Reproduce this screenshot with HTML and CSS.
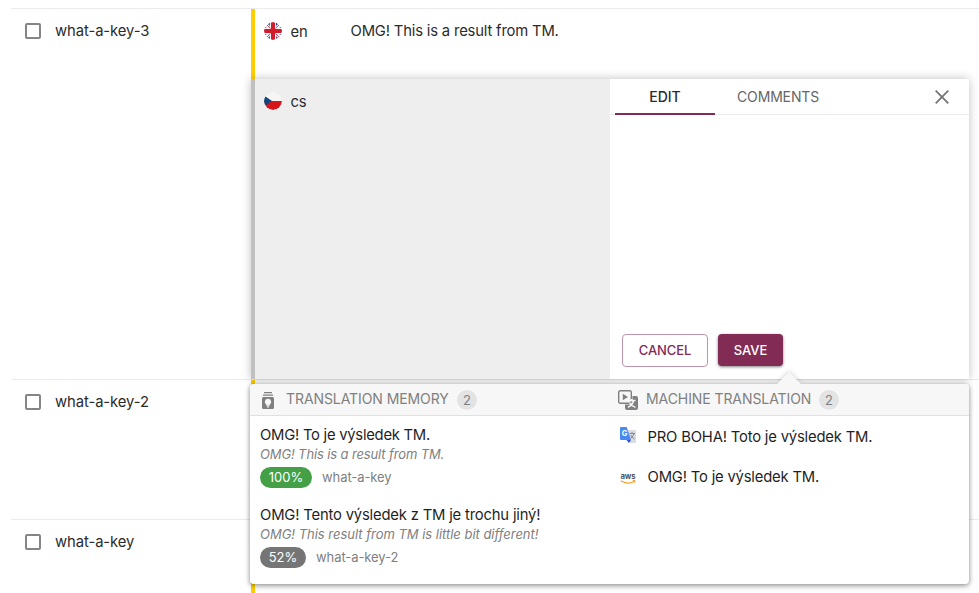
FILE: index.html
```html
<!DOCTYPE html>
<html lang="en">
<head>
<meta charset="utf-8">
<title>Translations</title>
<link rel="stylesheet" href="styles.css">
</head>
<body>
<main class="table">
  <section class="row row-active">
    <div class="key"><span class="checkbox"></span><span class="label">what-a-key-3</span></div>
    <div class="languages">
      <div class="language">
        <svg class="flag" viewBox="0 0 18 18"><defs><clipPath id="round"><circle cx="9" cy="9" r="9"/></clipPath></defs><g clip-path="url(#round)"><path fill="#f3f3f5" d="M0 0h18v18H0z"/><path fill="#24408e" d="M4.800 0H6v3zM12 0h1.200L12 3zM0 4.800 3 6H0zM18 4.800 15 6h3zM0 13.200 3 12H0zM18 13.200 15 12h3zM4.800 18H6v-3zM13.200 18H12v-3zM3.500 1.500 6 4V1.200zM14.500 1.500 12 4V1.200zM3.500 16.500 6 14v2.800zM14.500 16.500 12 14v2.800z"/><path stroke="#d2202f" stroke-width=".8" d="m2 2 4.500 4.500M16 2l-4.500 4.500M2 16l4.500-4.500M16 16l-4.500-4.500"/><path fill="#d01c2c" d="M7 0h4v7h7v4h-7v7H7v-7H0V7h7z"/></g></svg>
        <span class="code">en</span>
        <span class="source">OMG! This is a result from TM.</span>
      </div>
      <div class="editor">
        <div class="target">
          <svg class="flag" viewBox="0 0 18 18"><g clip-path="url(#round)"><path fill="#f5f5f5" d="M0 0h18v9H0z"/><path fill="#d7141a" d="M0 9h18v9H0z"/><path fill="#11457e" d="m0 3.500 8 5.500-8 5.500z"/></g></svg>
          <span class="code">cs</span>
        </div>
        <div class="pane">
          <nav class="tabs">
            <span class="tab tab-on">EDIT</span>
            <span class="tab tab-comments">COMMENTS</span>
            <svg class="close" viewBox="0 0 14 14"><path d="m.7.7 12.600 12.600M13.300.7.7 13.300"/></svg>
          </nav>
          <div class="actions">
            <button class="button cancel">CANCEL</button>
            <button class="button save">SAVE</button>
          </div>
        </div>
      </div>
    </div>
  </section>
  <section class="row row-second">
    <div class="key"><span class="checkbox"></span><span class="label">what-a-key-2</span></div>
    <div class="languages"></div>
  </section>
  <section class="row row-third">
    <div class="key"><span class="checkbox"></span><span class="label">what-a-key</span></div>
    <div class="languages"></div>
  </section>
</main>
<aside class="popup">
  <svg class="arrow" viewBox="0 0 24 12"><path d="M0 12 12 0l12 12z"/></svg>
  <div class="popup-head">
    <div class="head-cell">
      <svg class="memory-icon" viewBox="0 0 12 17"><path fill="#808080" fill-rule="evenodd" d="M2 0h8v1.300H2zM1 2.500h10v1.300H1zM1.500 5h9Q12 5 12 6.500v9q0 1.500-1.500 1.500h-9Q0 17 0 15.500v-9Q0 5 1.500 5zM6 6.700a3.200 3.200 0 0 0-1.700 5.900v1.200h3.400v-1.200A3.200 3.200 0 0 0 6 6.700zM5 14.300v1.200h2v-1.200z"/></svg>
      <span class="head-title memory-title">TRANSLATION MEMORY</span><span class="count">2</span>
    </div>
    <div class="head-cell head-machine">
      <svg class="machine-icon" viewBox="0 0 20 20"><rect x=".7" y=".7" width="12.600" height="12.600" rx="1.600" fill="none" stroke="#808080" stroke-width="1.400"/><path fill="#808080" d="M4.800 3.800 10 7l-5.200 3.200zM14.500 6H18q2 0 2 2v10q0 2-2 2H9q-2 0-2-2v-3.500h5.500q2 0 2-2z"/><path fill="none" stroke="#f7f7f7" stroke-width="1.300" d="M10 10.500h7.500M15.800 10.500q-1 4.500-6 6.800M11.700 13.200q2 3.200 5.800 4.200M13.600 9v1.500"/></svg>
      <span class="head-title machine-title">MACHINE TRANSLATION</span><span class="count">2</span>
    </div>
  </div>
  <div class="popup-body">
    <div class="memory">
      <article class="match">
        <p class="match-text match-text-short">OMG! To je výsledek TM.</p>
        <p class="match-base match-base-short">OMG! This is a result from TM.</p>
        <div class="match-meta"><span class="score score-full">100%</span><span class="match-key">what-a-key</span></div>
      </article>
      <article class="match">
        <p class="match-text">OMG! Tento výsledek z TM je trochu jiný!</p>
        <p class="match-base">OMG! This result from TM is little bit different!</p>
        <div class="match-meta"><span class="score score-part">52%</span><span class="match-key">what-a-key-2</span></div>
      </article>
    </div>
    <div class="machine">
      <div class="suggestion">
        <svg class="provider" viewBox="0 0 16 16"><path fill="#dadce0" d="M7 3h8q1 0 1 1v11q0 1-1 1H10z"/><path fill="#3550c8" d="M6.500 13H11l-2 3z"/><path fill="#4889f4" d="M1 0h5.700L11 13H1q-1 0-1-1V1q0-1 1-1z"/><text x="1.700" y="9" font-size="7.500" font-weight="700" fill="#fff">G</text><path fill="none" stroke="#71859a" stroke-width=".9" d="M9.500 6.500h5.500M12 5.200v1.300M14 6.500q-.5 3-3.500 5M10.700 8q1.200 2.500 3.800 4"/></svg>
        <span>PRO BOHA! Toto je výsledek TM.</span>
      </div>
      <div class="suggestion">
        <svg class="provider" viewBox="0 0 16 16"><text x=".5" y="9" font-size="7.800" font-weight="600" textLength="15" fill="#34404f">aws</text><path fill="none" stroke="#f79a20" stroke-width="1.100" d="M.7 10.800q7 4.200 13.300.7M12.800 10.500q3-.5 1.700 2"/></svg>
        <span>OMG! To je výsledek TM.</span>
      </div>
    </div>
  </div>
</aside>
</body>
</html>
```
FILE: styles.css
```css
* { box-sizing: border-box; }
body { margin: 0; height: 593px; overflow: hidden; position: relative; background: #fff; color: #2b2b2b; font: 14.8px/20px Inter, "Liberation Sans", sans-serif; }
p { margin: 0; }
svg { display: block; flex: none; }
.table { padding: 8px 0 0 11px; }
.row { display: flex; border-top: 1px solid #ebebeb; }
.row-active { height: 371px; }
.row-second { height: 140px; }
.row-third { height: 74px; }
.key { width: 240px; padding: 12px 0 0 14px; display: flex; align-items: flex-start; }
.checkbox { width: 16px; height: 16px; margin-top: 2px; border: 2px solid #858585; border-radius: 2px; }
.label { margin-left: 14px; letter-spacing: -.08px; }
.languages { flex: 1; border-left: 4px solid #ffce00; }
.row-active .languages { border-left: 0; }
.language { height: 70px; border-left: 4px solid #ffce00; display: flex; padding: 13px 0 0 9px; }
.flag { width: 18px; height: 18px; border-radius: 50%; }
.code { width: 60px; margin-left: 8.5px; letter-spacing: -.2px; }
.source { margin-top: -1px; letter-spacing: -.17px; }
.editor { width: 718px; height: 300px; display: flex; position: relative; box-shadow: 0 0 9px rgba(0,0,0,.25); }
.target { width: 359px; padding: 13px 0 0 9px; display: flex; background: #eee; border-left: 4px solid #c0c0c0; }
.pane { flex: 1; display: flex; flex-direction: column; justify-content: space-between; background: #fff; }
.tabs { height: 36px; display: flex; padding: 0 20px 0 5px; border-bottom: 1px solid #ebebeb; font-size: 14px; font-weight: 500; line-height: 36px; color: #666; }
.tab { height: 36px; }
.tab-on { width: 100px; text-align: center; color: #2b2b2b; border-bottom: 2px solid #822b55; }
.tab-comments { margin-left: 22px; font-weight: 400; letter-spacing: -.15px; }
.close { width: 14px; height: 14px; margin: 11px 0 0 auto; fill: none; stroke: #757575; stroke-width: 1.800; }
.actions { display: flex; gap: 10px; padding: 0 0 12px 12px; }
.button { height: 33px; padding: 0; border-radius: 4px; font: 500 13px/20px Inter, sans-serif; letter-spacing: -.1px; }
.cancel { width: 86px; padding-bottom: 1px; border: 1px solid #c095aa; background: #fff; color: #822b55; }
.save { width: 65px; height: 32px; border: 0; background: #822b55; color: #fff; box-shadow: 0 1px 3px rgba(0,0,0,.5); }
.popup { position: absolute; left: 250px; top: 384px; width: 719px; height: 200px; border-radius: 4px; background: #fff; box-shadow: 0 1px 5px rgba(0,0,0,.42), 0 3px 7px rgba(0,0,0,.1); }
.arrow { position: absolute; left: 527px; top: -12px; width: 24px; height: 12px; fill: #f7f7f7; filter: drop-shadow(0 -1px 2px rgba(0,0,0,.16)); }
.popup-head { position: relative; display: flex; height: 32px; background: #f7f7f7; border-bottom: 1px solid #e1e1e1; color: #808080; font-size: 14px; border-radius: 4px 4px 0 0; }
.head-cell { width: 359px; display: flex; align-items: center; padding-left: 12px; }
.head-machine { padding-left: 9px; }
.memory-icon { width: 12px; height: 17px; margin-top: 1px; }
.machine-icon { width: 20px; height: 20px; margin-top: 1px; }
.head-title { margin-top: -1px; letter-spacing: -.08px; }
.memory-title { margin-left: 12px; width: 171px; }
.machine-title { margin-left: 8px; width: 173px; }
.count { width: 20px; height: 20px; border-radius: 50%; text-align: center; background: #e3e3e3; font-size: 13px; margin-top: 1px; }
.popup-body { display: flex; color: #1f1f1f; letter-spacing: -.18px; }
.memory { width: 359px; padding: 9px 0 0 10px; }
.match { height: 80px; }
.match-text-short { letter-spacing: -.25px; }
.match-base { color: #808080; font-size: 13px; font-style: italic; line-height: 18px; letter-spacing: -.02px; padding-top: 0; }
.match-base-short { letter-spacing: -.13px; }
.match-meta { display: flex; align-items: center; gap: 10px; margin-top: 4px; font-size: 13px; letter-spacing: -.05px; }
.score { height: 21px; border-radius: 11px; color: #fff; text-align: center; line-height: 21px; }
.score-full { width: 52px; background: #43a047; }
.score-part { width: 46px; background: #757575; }
.match-key { color: #808080; margin-top: -1px; letter-spacing: -.08px; }
.machine { padding: 11px 0 0 11px; }
.suggestion { height: 40px; display: flex; }
.provider { width: 16px; height: 16px; margin: 0 11.5px 0 0; letter-spacing: 0; }
.suggestion + .suggestion .provider { margin-top: 3px; }
```
